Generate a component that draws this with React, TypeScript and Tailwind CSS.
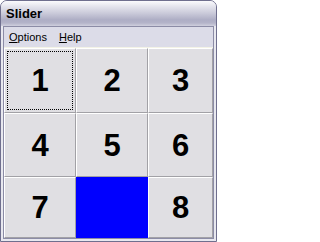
import React from 'react';

const cells: (string | null)[] = ['1', '2', '3', '4', '5', '6', '7', null, '8'];

const Tile = ({ label, focused }: { label: string | null; focused?: boolean }) => {
  if (label === null) {
    return <div className="bg-[#0000ff]" />;
  }
  return (
    <div
      className={
        'flex items-center justify-center bg-[#e0dfe3] border-t border-l border-t-white border-l-white border-r border-b border-r-[#a2a1a6] border-b-[#a2a1a6] text-[31px] font-bold leading-none text-black ' +
        (focused ? 'outline-1 outline-dotted outline-black outline-offset-[-4px]' : '')
      }
    >
      {label}
    </div>
  );
};

const App = () => {
  return (
    <div className="w-[217px] h-[242px] bg-white">
      <div className="flex flex-col w-full h-full border border-[#6f6f8e] rounded-t-[7px] overflow-hidden bg-[#e8e8ef] font-['Liberation_Sans',Arial,sans-serif]">
        {/* Title bar */}
        <div className="h-[25px] shrink-0 flex items-center pl-[5px] pt-[1px] bg-[linear-gradient(to_bottom,#fbfbfd_0%,#e6e6ee_20%,#c9c9d9_50%,#aeaec5_75%,#b4b4c9_88%,#d0d0de_100%)]">
          <span className="text-[13px] font-bold text-black">Slider</span>
        </div>

        {/* Frame */}
        <div className="flex-1 flex flex-col px-[2px] pb-[2px]">
          <div className="flex-1 flex flex-col border border-[#8c8ca6]">
            {/* Menu bar */}
            <div className="h-[20px] shrink-0 flex items-center bg-[#dcdce8] text-[11px] text-black">
              <span className="px-[5px]">
                <span className="underline">O</span>ptions
              </span>
              <span className="px-[7px]">
                <span className="underline">H</span>elp
              </span>
            </div>
            <div className="h-px shrink-0 bg-[#f3f3e6]" />

            {/* Board */}
            <div className="flex-1 grid grid-cols-[72px_72px_1fr] grid-rows-[65px_64px_1fr] bg-[#e0dfe3]">
              {cells.map((c, i) => (
                <Tile key={i} label={c} focused={i === 0} />
              ))}
            </div>
          </div>
        </div>
      </div>
    </div>
  );
};

export default App;
